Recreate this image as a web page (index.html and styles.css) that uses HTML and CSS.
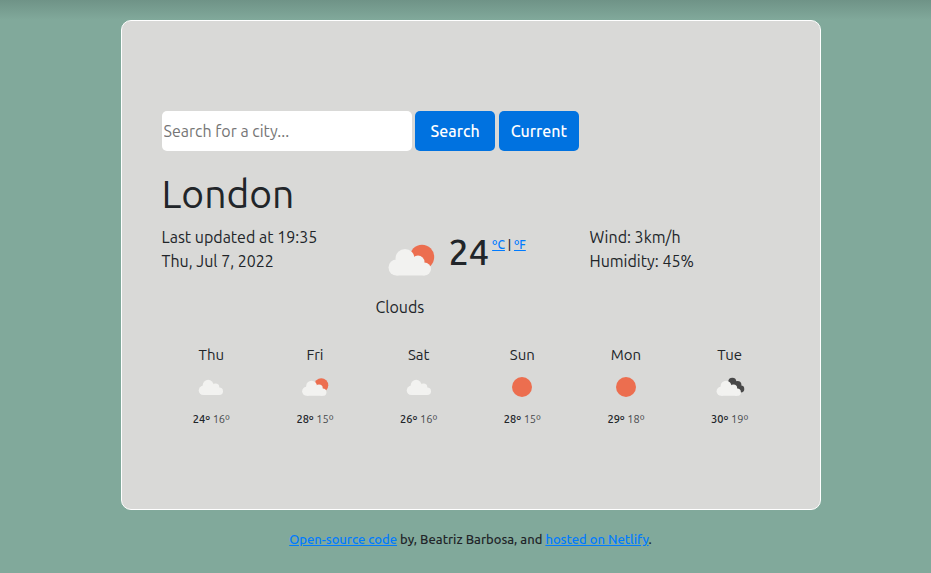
FILE: index.html
```html
<!DOCTYPE html>
<html lang="en">
<head>
<meta charset="utf-8">
<meta name="viewport" content="width=device-width, initial-scale=1">
<title>Weather</title>
<link rel="stylesheet" href="styles.css">
</head>
<body>
<svg class="sprite" aria-hidden="true">
  <symbol id="cloud" viewBox="0 0 70 70">
    <g class="cloud"><circle cx="20.5" cy="42" r="8"/><circle cx="29" cy="33" r="9.5"/><circle cx="42" cy="36.5" r="6.5"/><circle cx="48.5" cy="43.5" r="6.5"/><path d="M20.5 35H44l4.5 8.5V50h-28z"/></g>
  </symbol>
  <symbol id="sun" viewBox="0 0 70 70"><circle class="sun" cx="35" cy="35" r="17.5"/></symbol>
  <symbol id="sun-cloud" viewBox="0 0 70 70"><circle class="sun" cx="46" cy="32" r="12.2"/><use href="#cloud" y="0.5" width="70" height="70"/></symbol>
  <symbol id="dark-cloud" viewBox="0 0 70 70">
    <g class="dark"><circle cx="39" cy="26" r="7"/><circle cx="48" cy="31.5" r="7"/><circle cx="54" cy="38.5" r="6"/><path d="M39 26l9 2 6 10-5 6-14-10z"/></g>
    <use href="#cloud" x="-1" y="0.5" width="70" height="70"/>
  </symbol>
</svg>
<main class="card">
  <form class="search">
    <input class="search-input" type="search" placeholder="Search for a city..." aria-label="Search for a city">
    <button class="button" type="submit">Search</button>
    <button class="button" type="button">Current</button>
  </form>
  <h1 class="city">London</h1>
  <div class="current">
    <div>
      <div>Last updated at 19:35</div>
      <div>Thu, Jul 7, 2022</div>
    </div>
    <div>
      <div class="reading">
        <svg class="current-icon" role="img" aria-label="Clouds"><use href="#sun-cloud"/></svg>
        <strong class="temperature">24</strong>
        <span class="units"><a href="#">ºC</a> | <a href="#">ºF</a></span>
      </div>
      <div>Clouds</div>
    </div>
    <div>
      <div>Wind: 3km/h</div>
      <div>Humidity: 45%</div>
    </div>
  </div>
  <div class="forecast">
    <div class="day"><div class="day-name">Thu</div><svg class="day-icon" viewBox="0 0 70 70"><use href="#cloud" x="1" y="-1"/></svg><div class="range">24º <span class="low">16º</span></div></div>
    <div class="day"><div class="day-name">Fri</div><svg class="day-icon"><use href="#sun-cloud"/></svg><div class="range">28º <span class="low">15º</span></div></div>
    <div class="day"><div class="day-name">Sat</div><svg class="day-icon" viewBox="0 0 70 70"><use href="#cloud" x="1" y="-1"/></svg><div class="range">26º <span class="low">16º</span></div></div>
    <div class="day"><div class="day-name">Sun</div><svg class="day-icon"><use href="#sun"/></svg><div class="range">28º <span class="low">15º</span></div></div>
    <div class="day"><div class="day-name">Mon</div><svg class="day-icon"><use href="#sun"/></svg><div class="range">29º <span class="low">18º</span></div></div>
    <div class="day"><div class="day-name">Tue</div><svg class="day-icon"><use href="#dark-cloud"/></svg><div class="range">30º <span class="low">19º</span></div></div>
  </div>
</main>
<footer class="credits"><a href="#">Open-source code</a> by, Beatriz Barbosa, and <a href="#">hosted on Netlify</a>.</footer>
</body>
</html>
```
FILE: styles.css
```css
* { box-sizing: border-box; }
body {
  margin: 0;
  min-height: 100vh;
  padding: 20px 0 20px 10px;
  background: linear-gradient(#6f9387, #81a99b 20px) #81a99b;
  color: #212529;
  font: 16px/24px Ubuntu, "Noto Sans", sans-serif;
}
a { color: #007bff; }
.sprite { display: none; }
.cloud { fill: #f2f2f0; }
.sun { fill: #ec6e4f; }
.dark { fill: #484848; }
.card {
  max-width: 700px;
  margin: 0 auto;
  padding: 90px 40px 78px;
  border: 1px solid #fff;
  border-radius: 10px;
  background: #d9d9d7;
}
.search { margin-bottom: 19px; }
.search-input {
  width: 250px;
  height: 40px;
  padding: 0 2px;
  border: 0;
  border-radius: 5px;
  background: #fff;
  font: inherit;
}
.search-input::placeholder { color: #757575; }
.button {
  width: 80px;
  height: 40px;
  padding: 0;
  border: 0;
  border-radius: 5px;
  background: #0072e0;
  color: #fff;
  font: inherit;
  font-weight: 500;
}
.city { margin: 0 0 7px; font-size: 39px; line-height: 48px; font-weight: 400; }
.current { display: grid; grid-template-columns: repeat(3, 1fr); column-gap: 24px; margin: 0 -12px 24px; padding: 0 12px; }
.reading { display: flex; align-items: flex-start; gap: 3px; }
.current-icon { width: 70px; height: 70px; flex: none; }
.temperature { font-size: 36px; line-height: 54px; font-weight: 500; }
.units { font-size: 12px; line-height: 40px; font-weight: 500; white-space: nowrap; }
.forecast { display: grid; grid-template-columns: repeat(6, 1fr); margin: 0 -2px; text-align: center; }
.day-name { font-size: 15px; }
.day-icon { display: block; width: 40px; height: 40px; margin: 0 auto; }
.range { font-size: 11px; font-weight: 500; }
.low { font-weight: 400; opacity: 0.8; }
.credits { margin-top: 17px; font-size: 13px; font-weight: 500; text-align: center; }
```
